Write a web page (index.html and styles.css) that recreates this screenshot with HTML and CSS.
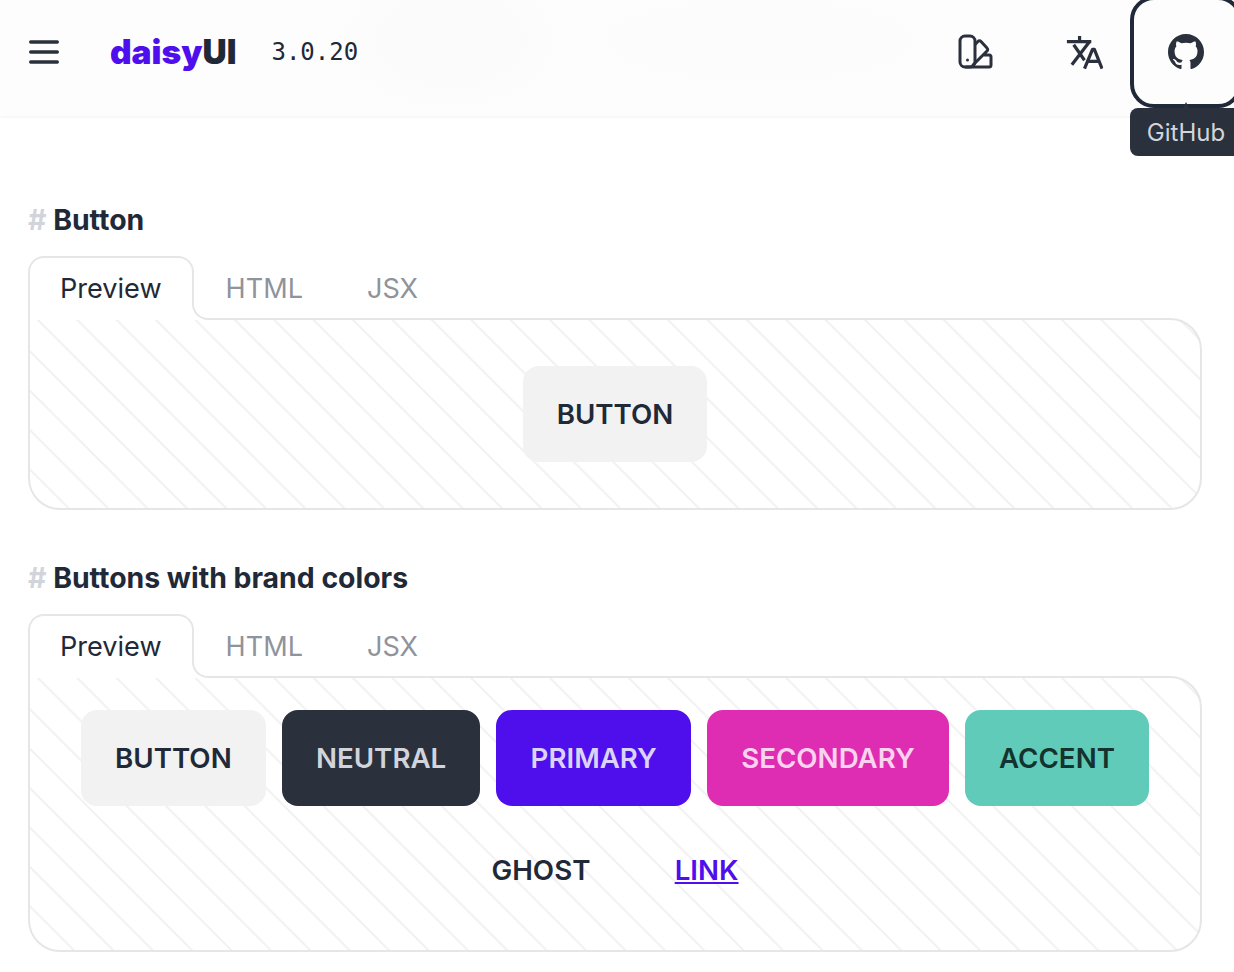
FILE: index.html
```html
<!DOCTYPE html>
<html lang="en">
<head>
  <meta charset="UTF-8" />
  <title>daisyUI - Button</title>
  <link rel="stylesheet" href="styles.css">
</head>
<body>

  <header class="navbar">
    <button class="icon-btn menu-btn" aria-label="Menu">
      <svg width="30" height="24" viewBox="0 0 30 24" fill="none" stroke="#2a303c" stroke-width="3.400" stroke-linecap="round">
        <path d="M1.700 2h26.600M1.700 12h26.600M1.700 22h26.600" />
      </svg>
    </button>
    <a class="logo"><span class="logo-brand">daisy</span>UI</a>
    <span class="version">3.0.20</span>

    <div class="nav-icons">
      <button class="icon-btn" aria-label="Theme">
        <svg width="36" height="36" viewBox="0 0 36 36" fill="none" stroke="#2a303c" stroke-width="3" stroke-linecap="round" stroke-linejoin="round">
          <rect x="2" y="2" width="15" height="31" rx="5" />
          <path d="M17.500 10l2.500-2.500a2 2 0 0 1 3 0l6 6.500a2 2 0 0 1 0 3L15 31M25 21h6a2 2 0 0 1 2 2v8a2 2 0 0 1-2 2H8" />
          <path d="M9.500 26h.01" />
        </svg>
      </button>
      <button class="icon-btn" aria-label="Language">
        <svg width="37" height="37" viewBox="0 0 24 24" fill="none" stroke="#2a303c" stroke-width="2.100" stroke-linejoin="round">
          <path d="M.6 4.900h15.800M8.800 1.300v3.600M15.200 5L3.800 20M5 7l7 10M12 22.500l5.200-12.500h1.200L23.400 22.500M14 17.700h7.500" />
        </svg>
      </button>
      <div class="github-wrap">
        <button class="icon-btn github-btn" aria-label="GitHub">
          <svg width="36" height="36" viewBox="0 0 16 16" fill="#2a303c">
            <path d="M8 0C3.580 0 0 3.580 0 8c0 3.540 2.290 6.530 5.470 7.590.4.070.55-.17.55-.38 0-.19-.01-.82-.01-1.490-2.010.37-2.530-.49-2.690-.94-.09-.23-.48-.94-.82-1.130-.28-.15-.68-.52-.01-.53.630-.01 1.080.58 1.230.82.720 1.210 1.870.87 2.330.66.070-.52.280-.87.510-1.070-1.780-.2-3.640-.89-3.640-3.950 0-.87.310-1.590.820-2.150-.08-.2-.36-1.020.08-2.120 0 0 .670-.21 2.200.82.640-.18 1.320-.27 2-.27.680 0 1.360.09 2 .27 1.530-1.040 2.200-.82 2.200-.82.440 1.100.160 1.920.080 2.120.510.560.820 1.270.820 2.150 0 3.070-1.870 3.750-3.650 3.950.290.25.540.730.540 1.480 0 1.070-.01 1.930-.01 2.200 0 .21.150.46.550.38A8.013 8.013 0 0 0 16 8c0-4.420-3.580-8-8-8z" />
          </svg>
        </button>
        <span class="tooltip">GitHub</span>
      </div>
    </div>
  </header>

  <main class="content">

    <section class="component">
      <h2 class="component-title"><span class="hash">#</span> Button</h2>
      <div class="tabs">
        <span class="tab active">Preview</span>
        <span class="tab">HTML</span>
        <span class="tab">JSX</span>
      </div>
      <div class="preview preview-single">
        <button class="btn">Button</button>
      </div>
    </section>

    <section class="component">
      <h2 class="component-title"><span class="hash">#</span> Buttons with brand colors</h2>
      <div class="tabs">
        <span class="tab active">Preview</span>
        <span class="tab">HTML</span>
        <span class="tab">JSX</span>
      </div>
      <div class="preview preview-brand">
        <button class="btn">Button</button>
        <button class="btn btn-neutral">Neutral</button>
        <button class="btn btn-primary">Primary</button>
        <button class="btn btn-secondary">Secondary</button>
        <button class="btn btn-accent">Accent</button>
        <button class="btn btn-ghost">Ghost</button>
        <button class="btn btn-link">Link</button>
      </div>
    </section>

  </main>
</body>
</html>
```

FILE: styles.css
```css
body {
  margin: 0;
  font-family: "Inter", "Liberation Sans", sans-serif;
  background-color: white;
  color: #1f2937;
  overflow: hidden;
}

button {
  font-family: inherit;
  border: none;
  background: none;
  padding: 0;
}

.navbar {
  display: flex;
  align-items: center;
  height: 116px;
  padding: 0 0 12px 29px;
  box-sizing: border-box;
  background-color: #fdfdfd;
  background-image:
    radial-gradient(ellipse 110px 70px at 450px 40px, #fbfbfb 60%, transparent 100%),
    radial-gradient(ellipse 170px 45px at 760px 40px, #fcfcfc 70%, transparent 100%);
  box-shadow: 0 1px 3px rgba(0, 0, 0, 0.06);
}

.icon-btn {
  display: flex;
  align-items: center;
  justify-content: center;
  width: 96px;
  height: 96px;
  flex-shrink: 0;
}

.menu-btn {
  width: 30px;
  margin-right: 51px;
}

.logo {
  font-weight: 900;
  font-size: 33.500px;
  color: #1f2937;
}

.logo-brand {
  color: #4f0eec;
}

.version {
  margin-left: 35px;
  font-family: "DejaVu Sans Mono", monospace;
  font-size: 24px;
  color: #1f2937;
}

.nav-icons {
  display: flex;
  align-items: center;
  gap: 12px;
  margin-left: auto;
}

.github-wrap {
  position: relative;
  margin-left: -6px;
}

.github-btn {
  border-radius: 16px;
  outline: 4px solid #1f2937;
  outline-offset: 4px;
}

.tooltip {
  position: absolute;
  top: 104px;
  left: -8px;
  width: 112px;
  height: 48px;
  line-height: 50px;
  text-align: center;
  font-size: 24px;
  color: #d1d5db;
  background-color: #2a303c;
  border-radius: 8px;
}

.tooltip::before {
  content: "";
  position: absolute;
  top: -6px;
  left: 50%;
  margin-left: -3px;
  border: 3px solid transparent;
  border-top-width: 0;
  border-bottom: 6px solid #2a303c;
}

.content {
  padding: 0 32px 0 28px;
}

.component {
  margin-top: 86px;
}

.component + .component {
  margin-top: 50px;
}

.component-title {
  margin: 0 0 18px;
  font-size: 28.400px;
  line-height: 36px;
  font-weight: 700;
}

.hash {
  color: #d1d5db;
}

.tabs {
  display: flex;
  height: 64px;
  font-size: 27.100px;
  position: relative;
  z-index: 1;
}

.tab {
  display: flex;
  align-items: center;
  padding: 0 32px 2px;
  box-sizing: border-box;
  color: #8f939b;
  height: 62px;
  margin-top: 2px;
}

.tab.active {
  position: relative;
  height: 64px;
  margin-top: 0;
  color: #1f2937;
  background-color: white;
  border: 2px solid #e5e6e6;
  border-bottom: none;
  border-radius: 16px 16px 0 0;
  padding: 0 30px 2px;
}

/* hides the straight border and the panel line under the curve */
.tab.active::before {
  content: "";
  position: absolute;
  right: -16px;
  bottom: 0;
  width: 16px;
  height: 16px;
  background-color: white;
}

/* concave corner where the active tab meets the panel */
.tab.active::after {
  content: "";
  position: absolute;
  right: -18px;
  bottom: 0;
  width: 16px;
  height: 16px;
  border-left: 2px solid #e5e6e6;
  border-bottom: 2px solid #e5e6e6;
  border-bottom-left-radius: 16px;
}

.preview {
  display: flex;
  flex-wrap: wrap;
  justify-content: center;
  align-items: center;
  gap: 16px;
  margin-top: -2px;
  box-sizing: border-box;
  border: 2px solid #e5e6e6;
  border-radius: 0 32px 32px 32px;
  background-color: white;
  background-image: linear-gradient(45deg, #f2f2f2 3.600%, transparent 0, transparent 50%, #f2f2f2 0, #f2f2f2 53.600%, transparent 0, transparent);
  background-size: 39.400px 39.400px;
  background-position: 7px 0;
}

.preview-single {
  height: 192px;
}

.preview-brand {
  padding: 32px;
}

.btn {
  height: 96px;
  padding: 0 34.150px;
  border-radius: 16px;
  background-color: #f2f2f2;
  color: #1f2937;
  font-size: 27.700px;
  font-weight: 600;
  text-transform: uppercase;
}

.btn-neutral {
  background-color: #2a303c;
  color: #d1d5db;
}

.btn-primary {
  background-color: #4f0eec;
  color: #dcd3fb;
}

.btn-secondary {
  background-color: #de2db3;
  color: #fbd3ef;
}

.btn-accent {
  background-color: #61cbba;
  color: #14332e;
}

.btn-ghost {
  background: none;
}

.btn-link {
  background: none;
  color: #4f0eec;
  text-decoration: underline;
}
```
